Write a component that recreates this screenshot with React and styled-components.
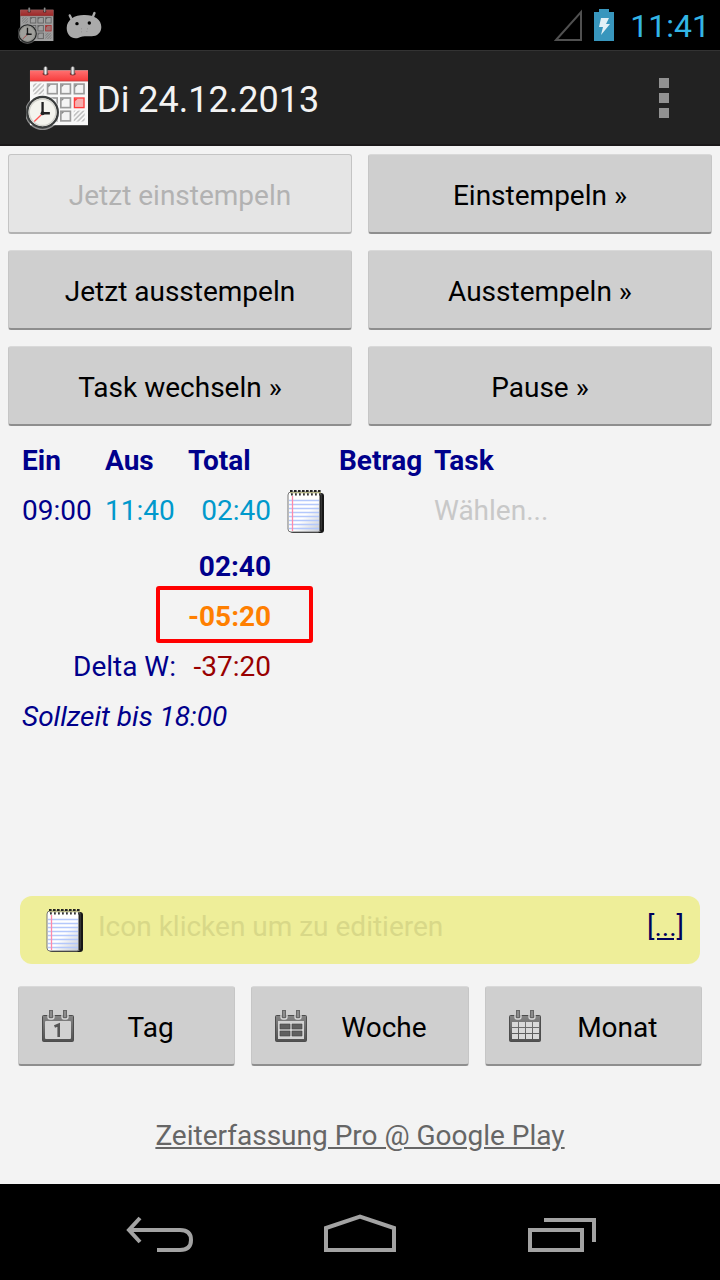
import React from "react";
import styled, { createGlobalStyle } from "styled-components";

const GlobalStyle = createGlobalStyle`
  *, *::before, *::after { box-sizing: border-box; }
  body { margin: 0; background: #f3f3f3; }
  button { font: inherit; color: inherit; cursor: pointer; }
`;

const Screen = styled.div`
  min-height: 100vh;
  display: flex;
  flex-direction: column;
  background: #f3f3f3;
  font-family: Roboto, "Liberation Sans", sans-serif;
  font-size: 28px;
  line-height: 34px;
  color: #00008b;
`;

const StatusBar = styled.div`
  height: 50px;
  padding: 0 10px 0 18px;
  display: flex;
  align-items: center;
  justify-content: space-between;
  background: #000;
`;

const StatusGroup = styled.div`
  display: flex;
  align-items: center;
  gap: 12px;
`;

const Clock = styled.span`
  font-size: 32px;
  line-height: 40px;
  padding: 2px 0 0 4px;
  color: #33b5e5;
`;

const ActionBar = styled.header`
  height: 96px;
  padding: 0 32px 0 26px;
  display: flex;
  align-items: center;
  gap: 8px;
  background: #222;
  border-top: 1px solid #333;
  border-bottom: 2px solid #1a1819;
`;

const Title = styled.h1`
  flex: 1;
  margin: 0;
  padding-top: 4px;
  font-size: 36px;
  line-height: 44px;
  font-weight: 400;
  color: #f3f3f3;
`;

const OverflowButton = styled.button`
  width: 48px;
  height: 64px;
  padding: 0;
  border: 0;
  background: none;
  display: grid;
  place-items: center;
`;

const Main = styled.main`
  flex: 1;
  display: flex;
  flex-direction: column;
`;

const StampGrid = styled.div`
  display: grid;
  grid-template-columns: 1fr 1fr;
  gap: 16px;
  padding: 8px 8px 10px;
`;

const PushButton = styled.button`
  height: 80px;
  padding: ${(p) => (p.$withIcon ? "0 8px 0 22px" : "0 16px")};
  display: flex;
  align-items: center;
  justify-content: center;
  border: 1px solid #c6c6c6;
  border-top-color: #d9d9d9;
  border-bottom: 2px solid #8e8e8e;
  border-radius: 3px;
  background: #cfcfcf;
  color: #000;

  &:disabled {
    background: #e5e5e5;
    border-color: #c4c4c4;
    border-bottom-color: #b2b2b2;
    color: #b2b2b2;
    cursor: default;
  }
`;

const ButtonLabel = styled.span`
  flex: 1;
  padding-top: 4px;
  text-align: center;
`;

const TableWrap = styled.div`
  padding: 0 22px;
`;

const TimeTable = styled.table`
  width: 100%;
  table-layout: fixed;
  border-collapse: collapse;
  line-height: 50px;
`;

const Col = styled.col`
  width: ${(p) => p.$w};
`;

const HeadCell = styled.th`
  padding: 0;
  text-align: left;
  font-weight: 700;
`;

const Cell = styled.td`
  position: relative;
  height: ${(p) => (p.$tall ? "56px" : "50px")};
  padding: 0 ${(p) => (p.$right ? "16px" : "0")} 0 0;
  vertical-align: top;
  white-space: nowrap;
  text-align: ${(p) => (p.$right ? "right" : "left")};
  font-weight: ${(p) => (p.$bold ? 700 : 400)};
  font-style: ${(p) => (p.$italic ? "italic" : "normal")};
  color: ${(p) => p.$color || "inherit"};
`;

const LabelCell = styled(Cell)`
  padding-right: 12px;
`;

const Highlight = styled.span`
  position: absolute;
  inset: -6px -26px -1px -32px;
  border: 4px solid #f00;
  border-radius: 3px;
  pointer-events: none;
`;

const IconButton = styled.button`
  display: block;
  padding: ${(p) => (p.$top ? "3px 0 0" : "0")};
  border: 0;
  background: none;
  line-height: 0;
`;

const TaskPicker = styled.button`
  padding: 0;
  border: 0;
  background: none;
  line-height: 50px;
  color: #c8c8c8;
`;

const Footer = styled.div`
  margin-top: auto;
  padding: 0 18px;
`;

const NoteBar = styled.div`
  height: 68px;
  margin: 0 2px;
  padding: 0 16px 0 26px;
  display: flex;
  align-items: center;
  gap: 14px;
  border-radius: 12px;
  background: #eeee99;
`;

const NoteHint = styled.span`
  flex: 1;
  padding-bottom: 6px;
  color: #d8d888;
`;

const MoreLink = styled.a`
  padding-bottom: 6px;
  color: #00005c;
  text-decoration: underline;
`;

const ViewRow = styled.nav`
  display: grid;
  grid-template-columns: repeat(3, 1fr);
  gap: 16px;
  padding-top: 22px;
`;

const StoreRow = styled.div`
  padding: 53px 0 31px;
  text-align: center;
`;

const StoreLink = styled.a`
  color: #666;
  text-decoration: underline;
`;

const SystemNav = styled.nav`
  height: 96px;
  padding: 4px 60px 0;
  display: grid;
  grid-template-columns: repeat(3, 1fr);
  background: #000;
`;

const NavButton = styled.button`
  padding: 0;
  border: 0;
  background: none;
  display: grid;
  place-items: center;
`;

const dayCells = [
  [141, 249], [181, 249], [222, 249],
  [141, 291], [181, 291],
  [141, 331], [181, 331],
];

function AppLogo({ id, width, height, dim }) {
  return (
    <svg width={width} height={height} viewBox="78 197 190 192" opacity={dim ? 0.65 : 1} aria-hidden="true">
      <defs>
        <linearGradient id={`${id}-red`} x1="0" y1="0" x2="0" y2="1">
          <stop offset="0" stopColor="#ff7070" />
          <stop offset="1" stopColor="#f73c3c" />
        </linearGradient>
        <linearGradient id={`${id}-ring`} x1="0" y1="0" x2="1" y2="0">
          <stop offset="0" stopColor="#777" />
          <stop offset=".5" stopColor="#f5f5f5" />
          <stop offset="1" stopColor="#666" />
        </linearGradient>
        <pattern id={`${id}-hatch`} width="10" height="10" patternUnits="userSpaceOnUse" patternTransform="rotate(45)">
          <rect width="5" height="10" fill="#c4c4c4" />
        </pattern>
      </defs>
      <rect x="90" y="210" width="175" height="165" fill="#f8f8f8" />
      <rect x="90" y="210" width="175" height="32" fill={`url(#${id}-red)`} />
      <path d="M90 242H265" stroke="#a44" strokeWidth="2" />
      <rect x="99" y="249" width="33" height="33" fill={`url(#${id}-hatch)`} />
      <rect x="222" y="331" width="33" height="33" fill={`url(#${id}-hatch)`} />
      {dayCells.map(([x, y]) => (
        <g key={`${x}-${y}`}>
          <rect x={x + 2} y={y + 2} width="29" height="29" fill="#f4f4f4" stroke="#9b9b9b" strokeWidth="5" />
          <path d={`M${x + 4} ${y + 4}h8l-8 8z`} fill="#888" />
        </g>
      ))}
      <rect x="224" y="293" width="29" height="29" fill="#f5b0b0" stroke="#ff3b3b" strokeWidth="4" />
      <path d="M226 295h8l-8 8z" fill="#ff3b3b" />
      {[131, 213].map((x) => (
        <g key={x}>
          <ellipse cx={x + 6} cy="220" rx="9" ry="5" fill="#8a2a2a" />
          <rect x={x} y="198" width="12" height="25" rx="6" fill={`url(#${id}-ring)`} stroke="#555" strokeWidth="1" />
        </g>
      ))}
      <circle cx="128" cy="337" r="53" fill="#f8f8f8" opacity=".5" />
      <circle cx="128" cy="336" r="46" fill="#f4f4ee" stroke="#3a3d3d" strokeWidth="7" />
      <circle cx="128" cy="336" r="40" fill="none" stroke="#d2d2cc" strokeWidth="4" />
      <path d="M128 340L103 364" stroke="#ff5555" strokeWidth="4" />
      <path d="M128 305V339H150" fill="none" stroke="#222" strokeWidth="7" />
      <circle cx="128" cy="339" r="6" fill="#222" />
    </svg>
  );
}

function AndroidHead() {
  return (
    <svg width="36" height="28" viewBox="200 34 105 80" aria-hidden="true">
      <path d="M211 46l8 17M283 39l-6 15" stroke="#aaa" strokeWidth="7" strokeLinecap="round" />
      <path d="M202 83C202 58 226 45 252 45C282 44 303 58 303 80C303 98 289 108 273 107C262 106 246 106 237 111C220 117 202 106 202 83Z" fill="#aaa" />
      <circle cx="232" cy="70" r="5" fill="#000" />
      <circle cx="268" cy="68" r="5" fill="#000" />
      <path d="M244 85h2M262 85h2M244 94h2M260 93h2" stroke="#777" strokeWidth="2" />
    </svg>
  );
}

function SignalIcon() {
  return (
    <svg width="28" height="32" viewBox="0 0 28 32" aria-hidden="true">
      <path d="M2 31L27 3V31Z" fill="none" stroke="#505050" strokeWidth="2" />
    </svg>
  );
}

function BatteryIcon() {
  return (
    <svg width="20" height="32" viewBox="0 0 20 32" aria-hidden="true">
      <path d="M0 3h5V0h10v3h5v29H0z" fill="#3896bd" />
      <path d="M7 9h8l-3 6h4L7 26l2-8H5z" fill="#e2f0f6" />
    </svg>
  );
}

function OverflowIcon() {
  return (
    <svg width="10" height="40" viewBox="0 0 10 40" fill="#929292" aria-hidden="true">
      <path d="M0 0h10v10H0zM0 15h10v10H0zM0 30h10v10H0z" />
    </svg>
  );
}

function NotepadIcon({ id }) {
  return (
    <svg width="38" height="45" viewBox="0 0 38 45" aria-hidden="true">
      <defs>
        <linearGradient id={id} x1="0" y1="0" x2="1" y2="1">
          <stop offset=".55" stopColor="#fff" />
          <stop offset="1" stopColor="#c4c8d0" />
        </linearGradient>
      </defs>
      <rect x="3" y="4" width="34" height="40" rx="3" fill="#161616" />
      <rect x="1" y="3" width="33" height="40" rx="3" fill={`url(#${id})`} stroke="#777" />
      <path d="M2 11.5H32M2 15.5H32M2 19.5H32M2 23.5H32M2 27.5H32M2 31.5H32M2 35.5H32M2 39.5H32" stroke="#b4c8fb" strokeWidth="1.3" />
      <path d="M5.5 7V42" stroke="#ff8aaa" strokeWidth="1.3" />
      <path d="M33.5 6V42" stroke="#222" strokeWidth="2" />
      <path d="M3 2H35" stroke="#222" strokeWidth="2.2" strokeDasharray="2.6 1.4" />
      <path d="M3 3.7H34" stroke="#b5b580" strokeWidth="1.2" />
      <path d="M4 5.4H34" stroke="#333" strokeWidth="2.4" strokeDasharray="1.8 2.2" />
    </svg>
  );
}

function CalendarIcon({ id, kind }) {
  return (
    <svg width="34" height="34" viewBox="0 0 34 34" aria-hidden="true">
      <defs>
        <linearGradient id={id} x1="0" y1="0" x2="0" y2="1">
          <stop offset="0" stopColor="#858585" />
          <stop offset="1" stopColor="#505050" />
        </linearGradient>
      </defs>
      <rect x="1.5" y="6.5" width="31" height="26" rx="1" fill={`url(#${id})`} stroke="#4d4d4d" />
      {[8, 22].map((x) => (
        <g key={x}>
          <path d={`M${x - 1} 6V8Q${x - 1} 10 ${x + 1} 10H${x + 3}Q${x + 5} 10 ${x + 5} 8V6`} fill="#777" stroke="#d8d8d8" strokeWidth="1.3" />
          <rect x={x + 0.5} y="1.5" width="3" height="7" fill="#8c8c8c" stroke="#666" />
        </g>
      ))}
      {kind === "day" && (
        <>
          <rect x="4" y="12" width="26" height="18" rx="1" fill="#d2d2d2" />
          <path d="M13.5 17.5L17.7 15.700V28" fill="none" stroke="#555" strokeWidth="2.6" />
        </>
      )}
      {kind === "week" && (
        <>
          <rect x="4" y="12" width="26" height="18" fill="#d2d2d2" />
          <path d="M6 15h10v5H6zM18 15h10v5H18zM6 22h10v5H6zM18 22h10v5H18z" fill="#606060" stroke="#444" strokeWidth=".6" />
        </>
      )}
      {kind === "month" && (
        <path
          d="M4 13h6v5H4zM11 13h6v5h-6zM18 13h6v5h-6zM25 13h6v5h-6zM4 19h6v5H4zM11 19h6v5h-6zM18 19h6v5h-6zM25 19h6v5h-6zM4 25h6v5H4zM11 25h6v5h-6zM18 25h6v5h-6zM25 25h6v5h-6z"
          fill="#dadada"
        />
      )}
    </svg>
  );
}

const stampActions = [
  { label: "Jetzt einstempeln", disabled: true },
  { label: "Einstempeln »" },
  { label: "Jetzt ausstempeln" },
  { label: "Ausstempeln »" },
  { label: "Task wechseln »" },
  { label: "Pause »" },
];

const views = [
  { label: "Tag", kind: "day" },
  { label: "Woche", kind: "week" },
  { label: "Monat", kind: "month" },
];

export default function App() {
  return (
    <>
      <GlobalStyle />
      <Screen>
        <StatusBar>
          <StatusGroup>
            <AppLogo id="status-logo" width="36" height="37" dim />
            <AndroidHead />
          </StatusGroup>
          <StatusGroup>
            <SignalIcon />
            <BatteryIcon />
            <Clock>11:41</Clock>
          </StatusGroup>
        </StatusBar>

        <ActionBar>
          <AppLogo id="bar-logo" width="63" height="64" />
          <Title>Di 24.12.2013</Title>
          <OverflowButton type="button" aria-label="Menü">
            <OverflowIcon />
          </OverflowButton>
        </ActionBar>

        <Main>
          <StampGrid>
            {stampActions.map((a) => (
              <PushButton key={a.label} type="button" disabled={a.disabled}>
                <ButtonLabel>{a.label}</ButtonLabel>
              </PushButton>
            ))}
          </StampGrid>

          <TableWrap>
            <TimeTable>
              <colgroup>
                <Col $w="83px" />
                <Col $w="83px" />
                <Col $w="99px" />
                <Col $w="52px" />
                <Col $w="95px" />
                <Col $w="auto" />
              </colgroup>
              <thead>
                <tr>
                  <HeadCell scope="col">Ein</HeadCell>
                  <HeadCell scope="col">Aus</HeadCell>
                  <HeadCell scope="col">Total</HeadCell>
                  <HeadCell />
                  <HeadCell scope="col">Betrag</HeadCell>
                  <HeadCell scope="col">Task</HeadCell>
                </tr>
              </thead>
              <tbody>
                <tr>
                  <Cell $tall>09:00</Cell>
                  <Cell $tall $color="#0099cc">11:40</Cell>
                  <Cell $tall $right $color="#0099cc">02:40</Cell>
                  <Cell $tall>
                    <IconButton type="button" $top aria-label="Notiz">
                      <NotepadIcon id="row-note" />
                    </IconButton>
                  </Cell>
                  <Cell $tall />
                  <Cell $tall>
                    <TaskPicker type="button">Wählen...</TaskPicker>
                  </Cell>
                </tr>
                <tr>
                  <Cell colSpan={2} />
                  <Cell $right $bold>02:40</Cell>
                  <Cell colSpan={3} />
                </tr>
                <tr>
                  <Cell colSpan={2} />
                  <Cell $right $bold $color="#ff7f00">
                    -05:20
                    <Highlight />
                  </Cell>
                  <Cell colSpan={3} />
                </tr>
                <tr>
                  <LabelCell colSpan={2} $right>Delta W:</LabelCell>
                  <Cell $right $color="#990000">-37:20</Cell>
                  <Cell colSpan={3} />
                </tr>
                <tr>
                  <Cell colSpan={6} $italic>Sollzeit bis 18:00</Cell>
                </tr>
              </tbody>
            </TimeTable>
          </TableWrap>

          <Footer>
            <NoteBar>
              <IconButton type="button" aria-label="Notiz bearbeiten">
                <NotepadIcon id="day-note" />
              </IconButton>
              <NoteHint>Icon klicken um zu editieren</NoteHint>
              <MoreLink href="#mehr">[...]</MoreLink>
            </NoteBar>

            <ViewRow>
              {views.map((v) => (
                <PushButton key={v.kind} type="button" $withIcon>
                  <CalendarIcon id={`cal-${v.kind}`} kind={v.kind} />
                  <ButtonLabel>{v.label}</ButtonLabel>
                </PushButton>
              ))}
            </ViewRow>

            <StoreRow>
              <StoreLink href="#pro">Zeiterfassung Pro @ Google Play</StoreLink>
            </StoreRow>
          </Footer>
        </Main>

        <SystemNav>
          <NavButton type="button" aria-label="Zurück">
            <svg width="68" height="40" viewBox="0 0 68 40" fill="none" stroke="#a3a3a3" strokeWidth="4" aria-hidden="true">
              <path d="M3 16H54Q65 16 65 26Q65 36 54 36H31" />
              <path d="M14 4L3 16L14 28" />
            </svg>
          </NavButton>
          <NavButton type="button" aria-label="Start">
            <svg width="72" height="40" viewBox="0 0 72 40" fill="none" stroke="#a3a3a3" strokeWidth="4" aria-hidden="true">
              <path d="M2 36V14L36 2.500L70 14V36Z" />
            </svg>
          </NavButton>
          <NavButton type="button" aria-label="Letzte Apps">
            <svg width="72" height="40" viewBox="0 0 72 40" fill="none" stroke="#a3a3a3" strokeWidth="4" aria-hidden="true">
              <path d="M6 16H58V36H6ZM20 6H70V28" />
            </svg>
          </NavButton>
        </SystemNav>
      </Screen>
    </>
  );
}
